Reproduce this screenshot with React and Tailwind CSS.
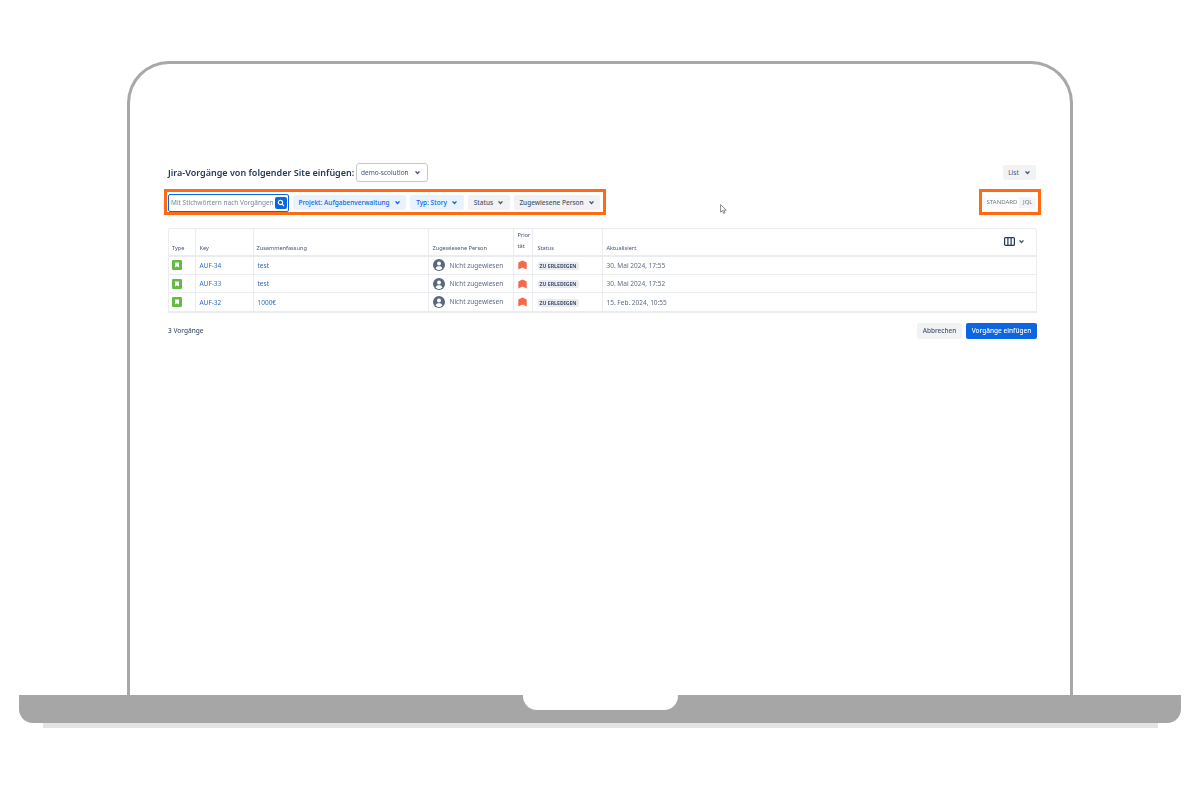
import React from "react";

const Chevron = ({ className = "w-[7px] h-[7px] text-[#44546f]" }) => (
  <svg viewBox="0 0 10 10" className={className} fill="none" stroke="currentColor" strokeWidth="2">
    <path d="M2.2 3.4 5 6.4 7.8 3.4" />
  </svg>
);

const StoryIcon = () => (
  <svg viewBox="0 0 10 10" className="w-[10px] h-[10px]">
    <rect width="10" height="10" rx="1.2" fill="#65ba43" />
    <path d="M3 2.4h4v5.2L5 6.2 3 7.6z" fill="#fff" />
  </svg>
);

const Avatar = () => (
  <svg viewBox="0 0 12 12" className="w-3 h-3 shrink-0">
    <circle cx="6" cy="6" r="6" fill="#5b6780" />
    <circle cx="6" cy="4.5" r="2" fill="#fff" />
    <path d="M2.6 9.4C3 7.8 4.2 7.2 6 7.2s3 .6 3.4 2.2c-.8.9-2 1.5-3.4 1.5s-2.6-.6-3.4-1.5z" fill="#fff" />
  </svg>
);

const PriorityIcon = () => (
  <svg viewBox="0 0 9 10" className="w-[9px] h-[10px]">
    <path d="M0.3 2.6 4.5 0.4l4.2 2.2V9.6L4.5 7.4.3 9.6z" fill="#f4694a" />
  </svg>
);

const rows = [
  { key: "AUF-34", summary: "test", updated: "30. Mai 2024, 17:55" },
  { key: "AUF-33", summary: "test", updated: "30. Mai 2024, 17:52" },
  { key: "AUF-32", summary: "1000€", updated: "15. Feb. 2024, 10:55" },
];

const FilterButton = ({ label, active, width }) => (
  <button
    className={`${width} h-[15px] flex items-center justify-center gap-[4px] rounded-[2px] text-[6.5px] font-medium whitespace-nowrap ${
      active ? "bg-[#e9f2ff] text-[#0c66e4]" : "bg-[#f1f2f4] text-[#44546f]"
    }`}
  >
    {label}
    <Chevron className={`w-[7px] h-[7px] ${active ? "text-[#0c66e4]" : "text-[#44546f]"}`} />
  </button>
);

export default function App() {
  return (
    <div className="w-[1200px] h-[790px] bg-white overflow-hidden relative font-['Noto_Sans',sans-serif]">
      {/* Laptop lid */}
      <div className="ml-[127px] mt-[61px] w-[946px] h-[634px] border-[3px] border-b-0 border-[#a8a8a8] rounded-t-[42px] pt-[99px] pl-[38px] pr-[33px]">
        <div className="blur-[0.3px]">
          {/* Title row */}
          <div className="flex items-center justify-between h-[19px]">
            <div className="flex items-center gap-[3px]">
              <h1 className="text-[9px] font-semibold text-[#253858] whitespace-nowrap w-[185px]">
                Jira-Vorgänge von folgender Site einfügen:
              </h1>
              <button className="w-[72px] h-[19px] border border-[#c4c7cc] rounded-[3px] flex items-center justify-between pl-[4px] pr-[6px] text-[6.5px] text-[#44546f]">
                demo-scolution
                <Chevron />
              </button>
            </div>
            <button className="mr-[1px] w-[33px] h-[15px] bg-[#f1f2f4] rounded-[2px] flex items-center justify-center gap-[5px] text-[6.5px] text-[#44546f]">
              List
              <Chevron />
            </button>
          </div>

          {/* Filter row */}
          <div className="flex items-center justify-between mt-[7px] -ml-[4px] -mr-[4px]">
            <div className="w-[442px] h-[26px] border-[3px] border-[#ff6a13] flex items-center pl-px pt-px gap-[4px]">
              <div className="w-[121px] h-[18px] border-[1.5px] border-[#0c66e4] rounded-[2px] flex items-center justify-between pl-[2px] pr-px">
                <span className="text-[6.5px] text-[#7a869a] whitespace-nowrap">Mit Stichwörtern nach Vorgängen</span>
                <span className="w-[12px] h-[12px] bg-[#0c66e4] rounded-[2px] flex items-center justify-center">
                  <svg viewBox="0 0 10 10" className="w-2 h-2" fill="none" stroke="#fff" strokeWidth="1.4">
                    <circle cx="4.3" cy="4.3" r="2.7" />
                    <path d="M6.4 6.4 8.8 8.8" />
                  </svg>
                </span>
              </div>
              <FilterButton label="Projekt: Aufgabenverwaltung" active width="w-[113px]" />
              <FilterButton label="Typ: Story" active width="w-[54px]" />
              <FilterButton label="Status" width="w-[42px]" />
              <FilterButton label="Zugewiesene Person" width="w-[86px]" />
            </div>
            <div className="w-[62px] h-[26px] border-[3px] border-[#ff6a13] flex items-center pl-px">
              <div className="w-[53px] flex items-center bg-[#f4f5f7] rounded-[2px] h-[11px] pl-[2px] text-[6px] text-[#6b778c]">
                <span className="w-[34px] bg-white rounded-[2px] h-[11px] flex items-center justify-center">STANDARD</span>
                <span className="pl-[4px]">JQL</span>
              </div>
            </div>
          </div>

          {/* Issues table */}
          <div className="mt-[13px] w-[869px] border border-[#ebecf0] border-b-2 rounded-t-[3px]">
            <table className="w-full table-fixed border-collapse text-[6.5px] text-[#44546f]">
              <colgroup>
                <col className="w-[26px]" />
                <col className="w-[58px]" />
                <col className="w-[175px]" />
                <col className="w-[85px]" />
                <col className="w-[19px]" />
                <col className="w-[70px]" />
                <col />
              </colgroup>
              <thead className="text-[5.6px]">
                <tr className="h-[27px] border-b-2 border-[#ebecf0] text-left align-bottom">
                  <th className="font-normal pl-[3px] pb-[3px]">Type</th>
                  <th className="font-normal pl-[4px] pb-[3px] border-l border-[#ebecf0]">Key</th>
                  <th className="font-normal pl-[3px] pb-[3px] border-l border-[#ebecf0]">Zusammenfassung</th>
                  <th className="font-normal pl-[4px] pb-[3px] border-l border-[#ebecf0]">Zugewiesene Person</th>
                  <th className="font-normal pl-[4px] pb-[3px] border-l border-[#ebecf0] leading-[11px]">Prior<br />tät</th>
                  <th className="font-normal pl-[5px] pb-[3px] border-l border-[#ebecf0]">Status</th>
                  <th className="font-normal pl-[4px] pb-[3px] border-l border-[#ebecf0] relative">
                    Aktualisiert
                    <span className="absolute right-[11px] top-[8px] flex items-center gap-[3px] text-[#253858]">
                      <svg viewBox="0 0 11 9" className="w-[11px] h-[9px]" fill="none" stroke="currentColor" strokeWidth="1.2">
                        <rect x=".6" y=".6" width="9.8" height="7.8" rx="1" />
                        <path d="M3.9.6v7.8M7.1.6v7.8" />
                      </svg>
                      <Chevron />
                    </span>
                  </th>
                </tr>
              </thead>
              <tbody>
                {rows.map((row, i) => (
                  <tr key={row.key} className={`h-[18.4px] ${i < 2 ? "border-b border-[#ebecf0]" : ""}`}>
                    <td className="pl-[3px]"><div className="flex"><StoryIcon /></div></td>
                    <td className="pl-[4px] pt-px border-l border-[#ebecf0] text-[#2f6cc4]">{row.key}</td>
                    <td className="pl-[4px] pt-px border-l border-[#ebecf0] text-[#2f6cc4]">{row.summary}</td>
                    <td className="pl-[4px] border-l border-[#ebecf0] text-[#5e6c84]">
                      <div className="flex items-center gap-[5px] whitespace-nowrap"><Avatar />Nicht zugewiesen</div>
                    </td>
                    <td className="pl-[4px] border-l border-[#ebecf0]"><div className="flex"><PriorityIcon /></div></td>
                    <td className="pl-[5px] pt-px border-l border-[#ebecf0]">
                      <span className="bg-[#e9ebf0] rounded-[2px] px-[2px] text-[5.2px] font-bold text-[#42526e] whitespace-nowrap">ZU ERLEDIGEN</span>
                    </td>
                    <td className="pl-[4px] pt-px border-l border-[#ebecf0] text-[#5e6c84]">{row.updated}</td>
                  </tr>
                ))}
              </tbody>
            </table>
          </div>

          {/* Footer */}
          <div className="mt-[10px] w-[869px] flex items-center justify-between">
            <span className="text-[6.5px] font-medium text-[#44546f]">3 Vorgänge</span>
            <div className="flex gap-[4px]">
              <button className="w-[45px] h-[16px] bg-[#f1f2f4] rounded-[2px] text-[6.5px] font-medium text-[#44546f]">Abbrechen</button>
              <button className="w-[71px] h-[16px] bg-[#0c66e4] rounded-[2px] text-[6.5px] font-medium text-white">Vorgänge einfügen</button>
            </div>
          </div>
        </div>
      </div>

      {/* Laptop base */}
      <div className="ml-[19px] w-[1162px] h-[28px] bg-[#a6a6a6] rounded-b-[14px] flex justify-center">
        <div className="w-[155px] h-[15px] bg-white rounded-b-[14px]"></div>
      </div>
      <div className="ml-[43px] w-[1115px] h-[5px] bg-[#e3e3e3]"></div>

      {/* Mouse cursor */}
      <svg viewBox="0 0 8 11" className="absolute left-[720px] top-[204px] w-[8px] h-[11px]" fill="#fff" stroke="#6b6b6b" strokeWidth="0.8">
        <path d="M.6.6v7.6l1.9-1.6 1.2 2.8 1.3-.6-1.2-2.7h2.5z" />
      </svg>
    </div>
  );
}
